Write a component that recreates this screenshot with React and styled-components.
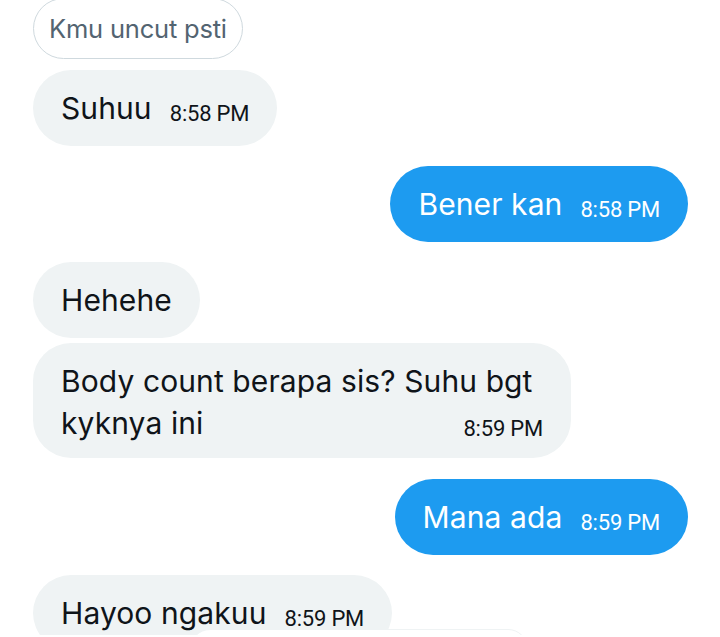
import React from 'react'
import styled, { createGlobalStyle } from 'styled-components'

const GlobalStyle = createGlobalStyle`
    html, body {
        margin: 0;
        padding: 0;
        background: #ffffff;
        overflow: hidden;
    }
    body {
        font-family: Inter, Roboto, "Noto Sans", sans-serif;
        color: #0f1419;
    }
`

const messages = [
    { id: 1, mine: false, text: 'Suhuu', time: '8:58 PM', gap: 11 },
    { id: 2, mine: true, text: 'Bener kan', time: '8:58 PM', gap: 20 },
    { id: 3, mine: false, text: 'Hehehe', gap: 20 },
    { id: 4, mine: false, lines: ['Body count berapa sis? Suhu bgt', 'kyknya ini'], time: '8:59 PM', gap: 5 },
    { id: 5, mine: true, text: 'Mana ada', time: '8:59 PM', gap: 21 },
    { id: 6, mine: false, text: 'Hayoo ngakuu', time: '8:59 PM', gap: 20 },
]

const App = () => {
    return (
        <>
            <GlobalStyle />
            <Thread>
                <Quote>Kmu uncut psti</Quote>
                {messages.map(m => (
                    <Row key={m.id} $mine={m.mine} $gap={m.gap}>
                        {m.lines ? (
                            <WideBubble>
                                <WideText>{m.lines[0]}</WideText>
                                <LastLine>
                                    <WideText>{m.lines[1]}</WideText>
                                    <Time>{m.time}</Time>
                                </LastLine>
                            </WideBubble>
                        ) : (
                            <Bubble $mine={m.mine}>
                                <Text>{m.text}</Text>
                                {m.time && <Time>{m.time}</Time>}
                            </Bubble>
                        )}
                    </Row>
                ))}
                <Sheet />
            </Thread>
        </>
    )
}

const Thread = styled.div`
    position: relative;
    display: flex;
    flex-direction: column;
    align-items: stretch;
    width: 720px;
    height: 637px;
    box-sizing: border-box;
    padding: 0 32px 0 33px;
    margin-top: -2px;
    overflow: hidden;
`

const Quote = styled.div`
    flex-shrink: 0;
    align-self: flex-start;
    box-sizing: border-box;
    height: 61px;
    display: flex;
    align-items: center;
    padding: 0 15px;
    border: 1.5px solid #cfd9de;
    border-radius: 31px;
    font-size: 25.5px;
    letter-spacing: -0.2px;
    color: #536471;
`

const Row = styled.div`
    display: flex;
    justify-content: ${p => (p.$mine ? 'flex-end' : 'flex-start')};
    margin-top: ${p => p.$gap}px;
    flex-shrink: 0;
`

const Bubble = styled.div`
    display: flex;
    align-items: baseline;
    gap: 18px;
    box-sizing: border-box;
    height: 76px;
    padding: 18px 28px;
    border-radius: 38px;
    background: ${p => (p.$mine ? '#1d9bf0' : '#eff3f4')};
    color: ${p => (p.$mine ? '#ffffff' : '#0f1419')};
`

const WideBubble = styled.div`
    display: flex;
    flex-direction: column;
    box-sizing: border-box;
    width: 538px;
    height: 115px;
    padding: 17px 28px 14px;
    border-radius: 38px;
    background: #eff3f4;
`

const LastLine = styled.div`
    display: flex;
    justify-content: space-between;
    align-items: baseline;
`

const Text = styled.div`
    font-size: 30px;
    line-height: 40px;
    letter-spacing: 0.1px;
`

const WideText = styled(Text)`
    line-height: 42px;
`

const Time = styled.span`
    font-family: Roboto, sans-serif;
    font-size: 22px;
    letter-spacing: -0.2px;
    white-space: nowrap;
    transform: translateY(2px);
`

const Sheet = styled.div`
    position: absolute;
    left: 190px;
    top: 631px;
    width: 336px;
    height: 80px;
    background: #ffffff;
    border: 1px solid #eff3f4;
    border-radius: 20px;
`

export default App
